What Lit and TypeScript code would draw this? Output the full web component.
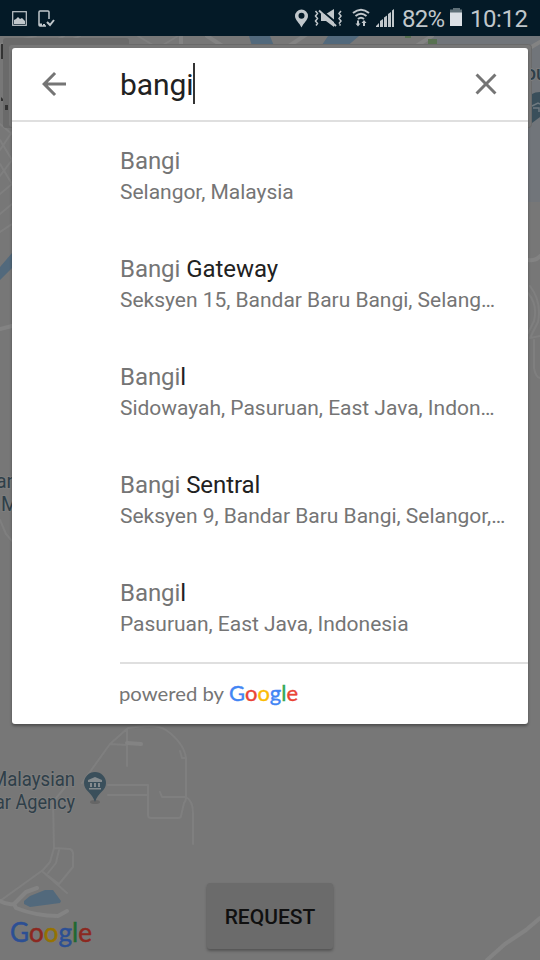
import { LitElement, html, css } from "lit";
import { customElement } from "lit/decorators.js";

interface Place { match: string; rest: string; area: string; }

const PLACES: Place[] = [
  { match: "Bangi", rest: "", area: "Selangor, Malaysia" },
  { match: "Bangi", rest: " Gateway", area: "Seksyen 15, Bandar Baru Bangi, Selang…" },
  { match: "Bangi", rest: "l", area: "Sidowayah, Pasuruan, East Java, Indon…" },
  { match: "Bangi", rest: " Sentral", area: "Seksyen 9, Bandar Baru Bangi, Selangor,…" },
  { match: "Bangi", rest: "l", area: "Pasuruan, East Java, Indonesia" },
];

@customElement("map-backdrop")
class MapBackdrop extends LitElement {
  static styles = css`
    :host { display: block; position: absolute; inset: 0; }
    svg { display: block; }
    .label { font: 400 19.5px Roboto, sans-serif; fill: #2f3f49; stroke: #7d7d7d; stroke-width: 2px; paint-order: stroke; }
    .strong { font-weight: 500; }
    .logo { font: 400 27px Lato, sans-serif; stroke-width: .5px; }
    .b { fill: #2c4f94; stroke: #2c4f94; } .r { fill: #8c2820; stroke: #8c2820; }
    .y { fill: #967200; stroke: #967200; } .g { fill: #1f6930; stroke: #1f6930; }
    .road { fill: none; stroke: #7f7f7f; stroke-width: 2; stroke-linejoin: round; stroke-linecap: round; }
    .wide { stroke-width: 4; stroke: #838383; }
    .water { fill: #52697c; }
    .pin { fill: #3a4f5b; }
  `;
  render() {
    return html`<svg width="540" height="960" viewBox="0 0 540 960">
      <rect width="540" height="960" fill="#777777"/>
      <rect x="430" y="36" width="110" height="166" fill="#71757a"/>
      <path class="road" d="M0 44L36 36M30 54L64 36M52 48l28-12M138 36l20 12 20-12M0 140L12 160M0 164L12 184M0 124L12 134M0 150L12 132M0 176L12 160M0 194L12 184M0 214L12 204M0 232L12 224"/>
      <path class="road wide" d="M181 36v14M207 36l28 18M283 50l24-16M410 50l22-14M0 329l12-3M528 49l12-7M528 260q8 1 12-4"/>
      <path class="road" d="M528 293q10 12 6 28l-6 12M530 286q12 16 8 36l-8 16 10-2M534 340v28q2 10 6 10"/>
      <path class="water" d="M249 36h21l4 10h-22zM328 36h31l-14 12h-25zM0 267L12 253V268L0 280z"/>
      <rect x="3" y="38" width="126" height="90" rx="3" fill="#6a6a6a"/>
      <rect x="8.500" y="44.500" width="523" height="83" rx="3" fill="#777777" stroke="#6a6a6a"/>
      <path fill="#587151" d="M405 36h6v2h-6zM428 39h9v5h-9z"/>
      <path fill="#333" d="M1 44h2v15H1zM1 97l2 2v2H1zM5 105h3v5H5z"/>
      <text class="label strong" x="525" y="80">ou</text>
      <rect x="526" y="60" width="5" height="24" fill="#777777"/>
      <path class="pin" d="M532 94q3-2 8-2v25l-8 6z"/>
      <path fill="none" stroke="#6f7a81" stroke-width="1.500" d="M532 106l6-3 2 1M533 108h6v4"/>
      <text class="label" x="-4" y="488">an</text>
      <text class="label" x="1" y="511">M</text>
      <path class="road" d="M0 520l6 14 6 7"/>
      <path class="road" d="M82 783L110 744 128 728Q157 723 166 730Q184 743 186 758V797q0 4-2 6l-3 13q0 2-3 2h-27q-3 0-3-3V785H108M108 795h40M110 744l17 1M127 730v36M180 751l2 7h4M66 786l-13 16 1 46-4 14-7 8L0 901M54 848l16 1q4 2 3 8v10l-14 17-16-12 24 21M59 850l-3 13-8 10M160 792l2 5h24q7 4 7 16v31"/>
      <path class="road wide" d="M127 743l14 1M0 901q6 4 14 3L26 892l11-4M14 904l2 4q20 8 42 8l9-5M487 960l18-16 21-14 14-12"/>
      <path class="water" d="M24 901l6-5 15-6h8l8 11-1 2-30 4-6-3z"/>
      <text class="label" x="-9" y="785.500" textLength="84" lengthAdjust="spacingAndGlyphs">Malaysian</text>
      <text class="label" x="-5" y="808.500" textLength="80" lengthAdjust="spacingAndGlyphs">ar Agency</text>
      <ellipse cx="95" cy="802" rx="5" ry="2" fill="#666"/>
      <path class="pin" d="M95 772a11 11 0 0 1 11 11c0 8-8 9-11 19c-3-10-11-11-11-19a11 11 0 0 1 11-11z"/>
      <path fill="#858b8e" d="M88 780l7-3 7 3v2H88zM90 783h2v4h-2zM94 783h2v4h-2zM98 783h2v4h-2zM89 788h12v1.500H89z"/>
      <text class="logo" x="10" y="942" textLength="82" lengthAdjust="spacingAndGlyphs"><tspan class="b">G</tspan><tspan class="r">o</tspan><tspan class="y">o</tspan><tspan class="b">g</tspan><tspan class="g">l</tspan><tspan class="r">e</tspan></text>
    </svg>`;
  }
}

@customElement("status-bar")
class StatusBar extends LitElement {
  static styles = css`
    :host { display: block; height: 36px; background: #041a27; }
    text { font: 24px Roboto, sans-serif; fill: #c1c7cb; }
    .i { fill: #c1c7cb; }
    .l { fill: none; stroke: #c1c7cb; stroke-width: 1.5; }
    .bold { stroke-width: 2; }
    .thin { stroke-width: 1.2; }
  `;
  render() {
    return html`<svg width="540" height="36" viewBox="0 0 540 36">
      <rect class="l thin" x="12.700" y="11.700" width="13.600" height="13.600"/>
      <path class="i" d="M14 24v-4l2-1 2-2 2 2 2-1 3 3v3z"/>
      <path class="l" d="M49 19v-7q0-1-1-1h-8q-1 0-1 1v13q0 1 1 1h6"/>
      <path class="l bold" d="M47 22l3 3 4-5"/><path class="i" d="M39 23.500h3V26h-3zM43 24h2v2h-2z"/>
      <path class="i" fill-rule="evenodd" d="M301.500 9.500a6.500 6.500 0 0 1 6.500 6.500c0 4-4.500 7-6.500 11.500c-2-4.500-6.500-7.500-6.500-11.500a6.500 6.500 0 0 1 6.500-6.500zm0 3.300a3 3 0 1 0 0 6a3 3 0 1 0 0-6z"/>
      <path class="l" d="M315.500 11l2 2.500-2 2.500 2 2.500-2 2.500 2 2.500-1.500 2M341 11l-2 2.500 2 2.500-2 2.500 2 2.500-2 2.500 1.500 2"/>
      <path class="i" d="M321 14h5l8-5v18l-8-6h-5z"/>
      <path d="M321 10L339 25" stroke="#041a27" stroke-width="2"/><path class="l bold" d="M319 10.500L336 26"/>
      <path class="l bold" d="M353 13q8-6.500 16 0M355.500 16q5.500-4.500 11 0M358 19q3-2.500 6 0"/>
      <path class="i" d="M357 20.500h2v3h1.500l-2.500 3-2.500-3h1.500zM363 26h2v-3h1.500L364 20l-2.500 3h1.500z"/>
      <path class="i" d="M376 27v-1l3-3v4zM380 27v-6l3-2v8zM384 27V17.500l3-2V27zM388 27V14l3-2v15zM392 27V10.500l2-1.500v18z"/>
      <text x="402" y="27" textLength="43">82%</text>
      <path fill="#5f7078" d="M453 8h7v1.500h2V14h-12V9.500h3z"/><path fill="#dce1e6" d="M450 12.500h12V26h-12z"/>
      <text x="470" y="27" textLength="58">10:12</text>
    </svg>`;
  }
}

@customElement("app-root")
class AppRoot extends LitElement {
  static styles = css`
    :host { display: block; position: relative; width: 540px; height: 960px; overflow: hidden; font-family: Roboto, sans-serif; background: #777777; }
    status-bar { position: relative; }
    .dialog { position: relative; box-sizing: border-box; width: 516px; height: 676px; margin: 12px 12px 0; background: #fff; border-radius: 3px; box-shadow: 0 2px 3px rgba(0,0,0,.35); overflow: hidden; }
    .search { display: flex; align-items: center; height: 72px; border-bottom: 2px solid #dfdfdf; }
    .back { margin-left: 24px; width: 36px; height: 36px; }
    .close { width: 36px; height: 36px; margin-right: 24px; }
    .query { flex: 1; display: flex; align-items: center; margin-left: 48px; font-size: 30px; color: #212121; letter-spacing: -.1px; }
    .caret { width: 2px; height: 41px; background: #333; margin: -2px 0 0 -.8px; }
    .place { height: 108px; box-sizing: border-box; padding: 24px 20px 0 108px; }
    .name { font-size: 24px; line-height: 30px; color: #757575; white-space: pre; letter-spacing: -.06px; }
    .name b { font-weight: 400; color: #212121; }
    .area { font-size: 21px; line-height: 32px; color: #757575; white-space: nowrap; letter-spacing: -.02px; }
    .footer { margin-left: 108px; border-top: 2px solid #dfdfdf; }
    .footer svg { display: block; margin-left: -2px; }
    .powered { font: 19.5px Lato, sans-serif; fill: #757575; }
    .brand { font: 400 22px Lato, sans-serif; stroke-width: .4px; }
    .b { fill: #4285f4; stroke: #4285f4; } .r { fill: #ea4335; stroke: #ea4335; }
    .y { fill: #fbbc05; stroke: #fbbc05; } .g { fill: #34a853; stroke: #34a853; }
    .request { position: relative; box-sizing: border-box; display: flex; align-items: center; justify-content: center; width: 126px; height: 66px; padding-top: 2px; margin: 159px 0 0 207px; border-radius: 3px; background: #6b6b6b; box-shadow: 0 2px 3px rgba(0,0,0,.3); color: #101010; font-size: 21px; font-weight: 500; }
  `;
  render() {
    return html`
      <map-backdrop></map-backdrop>
      <status-bar></status-bar>
      <div class="dialog">
        <div class="search">
          <svg class="back" viewBox="0 0 24 24"><path fill="#757575" d="M20 11H7.830l5.590-5.590L12 4l-8 8 8 8 1.410-1.410L7.830 13H20v-2z"/></svg>
          <div class="query">bangi<span class="caret"></span></div>
          <svg class="close" viewBox="0 0 24 24"><path fill="#757575" d="M19 6.410L17.590 5 12 10.590 6.410 5 5 6.410 10.590 12 5 17.590 6.410 19 12 13.410 17.590 19 19 17.590 13.410 12z"/></svg>
        </div>
        ${PLACES.map(p => html`<div class="place">
          <div class="name">${p.match}<b>${p.rest}</b></div>
          <div class="area">${p.area}</div>
        </div>`)}
        <div class="footer">
          <svg width="200" height="58" viewBox="0 0 200 58">
            <text class="powered" x="1" y="36.500" textLength="105" lengthAdjust="spacingAndGlyphs">powered by</text>
            <text class="brand" x="111" y="36.500" textLength="69" lengthAdjust="spacingAndGlyphs"><tspan class="b">G</tspan><tspan class="r">o</tspan><tspan class="y">o</tspan><tspan class="b">g</tspan><tspan class="g">l</tspan><tspan class="r">e</tspan></text>
          </svg>
        </div>
      </div>
      <div class="request">REQUEST</div>
    `;
  }
}
